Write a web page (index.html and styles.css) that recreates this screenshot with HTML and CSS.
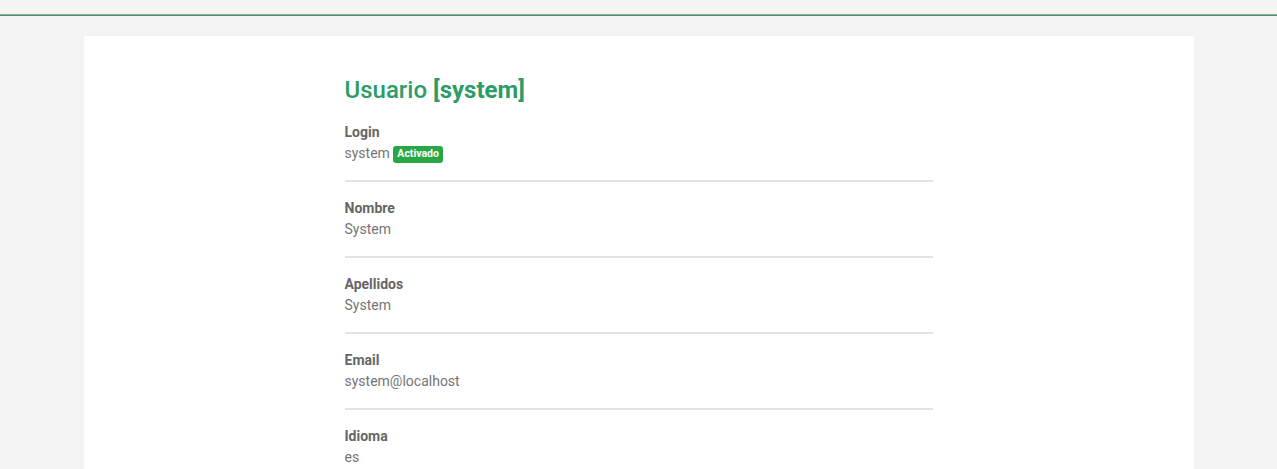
FILE: index.html
```html
<!DOCTYPE html>
<html lang="es">
<head>
  <meta charset="UTF-8">
  <title>Usuario [system]</title>
  <meta name="viewport" content="width=device-width, initial-scale=1.0">
  <link rel="stylesheet" href="styles.css">
</head>
<body>

  <div class="topbar"></div>

  <div class="card">
    <div class="detail">
      <h3 class="title">Usuario <b>[system]</b></h3>

      <div class="field">
        <div class="label">Login</div>
        <div class="value">system <span class="badge">Activado</span></div>
      </div>
      <div class="field">
        <div class="label">Nombre</div>
        <div class="value">System</div>
      </div>
      <div class="field">
        <div class="label">Apellidos</div>
        <div class="value">System</div>
      </div>
      <div class="field">
        <div class="label">Email</div>
        <div class="value">system@localhost</div>
      </div>
      <div class="field last">
        <div class="label">Idioma</div>
        <div class="value">es</div>
      </div>
    </div>
  </div>

</body>
</html>
```

FILE: styles.css
```css
body {
  margin: 0;
  background: #f4f4f4;
  font-family: Roboto, "Liberation Sans", Arial, sans-serif;
  font-size: 14px;
  line-height: 21px;
  color: #757575;
}

.topbar {
  height: 14px;
  border-bottom: 1px solid #a0a0a0;
  box-shadow: 0 1px 0 #3c9c6c;
}

.card {
  width: 1110px;
  margin: 21px auto 0;
  background: #fff;
  padding: 40px 0 40px;
  border-radius: 2px;
}

.detail {
  width: 588px;
  margin: 0 auto;
}

.title {
  margin: 0 0 17px;
  font-size: 24px;
  line-height: 29px;
  font-weight: 500;
  color: #2c9d69;
}

.title b {
  font-weight: 700;
}

.field {
  padding-bottom: 16px;
  border-bottom: 2px solid #e2e2e2;
  margin-bottom: 16px;
}

.field.last {
  border-bottom: none;
}

.label {
  font-weight: 700;
  color: #666;
}

.badge {
  display: inline-block;
  background: #28a745;
  color: #fff;
  font-size: 10.5px;
  font-weight: 700;
  line-height: 1;
  padding: 3px 4px;
  border-radius: 3px;
  vertical-align: 1px;
}
```
